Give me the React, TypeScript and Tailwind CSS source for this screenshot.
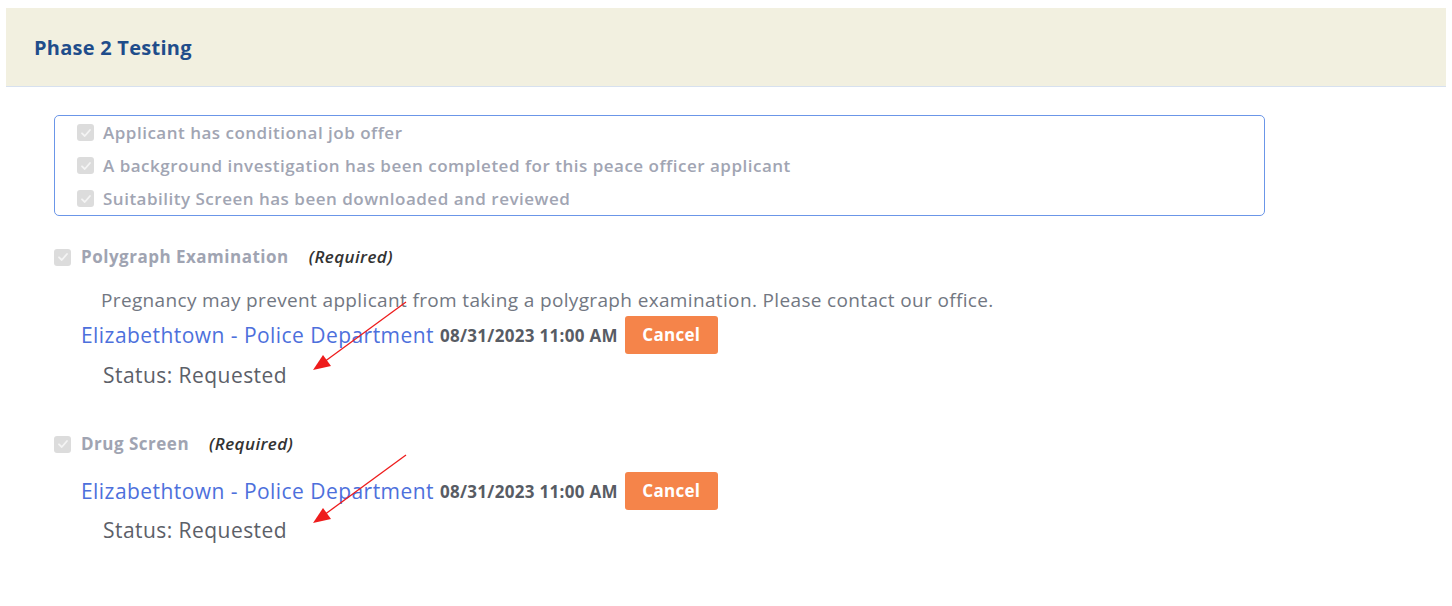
import React from 'react';

const font = { fontFamily: '"Open Sans", "Noto Sans", sans-serif' };

const CheckMark: React.FC = () => (
  <span className="w-[17px] h-[17px] rounded-[3px] bg-[#dcdcdc] flex items-center justify-center shrink-0">
    <svg width="12" height="12" viewBox="0 0 12 12" fill="none">
      <path d="M2 6.3 L4.8 9 L10 3" stroke="#f4f4f4" strokeWidth="1.8" strokeLinecap="round" strokeLinejoin="round" />
    </svg>
  </span>
);

const Arrow: React.FC<{ top: number; left: number }> = ({ top, left }) => (
  <svg className="absolute pointer-events-none" style={{ top, left }} width="100" height="76" viewBox="0 0 100 76">
    <line x1="96" y1="2" x2="14" y2="62" stroke="#ee1c1c" strokeWidth="1.3" />
    <polygon points="3,70 13,55 21,66" fill="#ee1c1c" />
  </svg>
);

const Booking: React.FC = () => (
  <div className="flex items-center h-[38px] ml-[27px]">
    <a className="text-[21px] tracking-[0.45px] text-[#4d70dc] leading-none">Elizabethtown - Police Department</a>
    <span className="ml-[6px] text-[17px] tracking-[0.3px] font-bold text-[#585c64] leading-none">08/31/2023 11:00 AM</span>
    <button className="ml-[7px] w-[93px] h-[38px] rounded-[3px] bg-[#f5844a] text-white text-[17px] tracking-[0.3px] font-bold">Cancel</button>
  </div>
);

const Status: React.FC<{ className?: string }> = ({ className = '' }) => (
  <div className={`h-[30px] flex items-center ml-[49px] text-[21px] tracking-[0.45px] text-[#5c6068] ${className}`}>Status: Requested</div>
);

const checklist = [
  'Applicant has conditional job offer',
  'A background investigation has been completed for this peace officer applicant',
  'Suitability Screen has been downloaded and reviewed',
];

export default function App() {
  return (
    <div className="relative w-full h-[606px] bg-white pt-[8px] px-[6px]" style={font}>
      <div className="h-[79px] bg-[#f2f0e0] border-b border-[#d7e1ef] flex items-center pl-[28px]">
        <h2 className="text-[20px] tracking-[0.25px] font-bold text-[#1f4d8b] mt-[2px]">Phase 2 Testing</h2>
      </div>

      <div className="pl-[48px] pt-[28px]">
        <div className="w-[1211px] border-[1.5px] border-[#6b96e8] rounded-[5px] pl-[22px]">
          {checklist.map((item) => (
            <div key={item} className="h-[33px] flex items-center gap-[9px]">
              <CheckMark />
              <span className="text-[17px] tracking-[0.5px] font-semibold text-[#a1a5b3]">{item}</span>
            </div>
          ))}
        </div>

        <div className="mt-[25px] h-[32px] flex items-center">
          <CheckMark />
          <span className="ml-[10px] text-[17px] tracking-[0.5px] font-bold text-[#a0a4b2]">Polygraph Examination</span>
          <span className="ml-[20px] text-[17px] tracking-[0.4px] font-semibold italic text-[#333]">(Required)</span>
        </div>
        <div className="mt-[13px] h-[28px] flex items-center ml-[47px] text-[19px] tracking-[0.35px] text-[#727782]">
          Pregnancy may prevent applicant from taking a polygraph examination. Please contact our office.
        </div>
        <div className="mt-[2px]">
          <Booking />
        </div>
        <Status className="mt-[7px]" />

        <div className="mt-[37px] h-[32px] flex items-center">
          <CheckMark />
          <span className="ml-[10px] text-[17px] tracking-[0.5px] font-bold text-[#a0a4b2]">Drug Screen</span>
          <span className="ml-[20px] text-[17px] tracking-[0.4px] font-semibold italic text-[#333]">(Required)</span>
        </div>
        <div className="mt-[12px]">
          <Booking />
        </div>
        <Status className="mt-[6px]" />
      </div>

      <Arrow top={300} left={310} />
      <Arrow top={453} left={310} />
    </div>
  );
}
